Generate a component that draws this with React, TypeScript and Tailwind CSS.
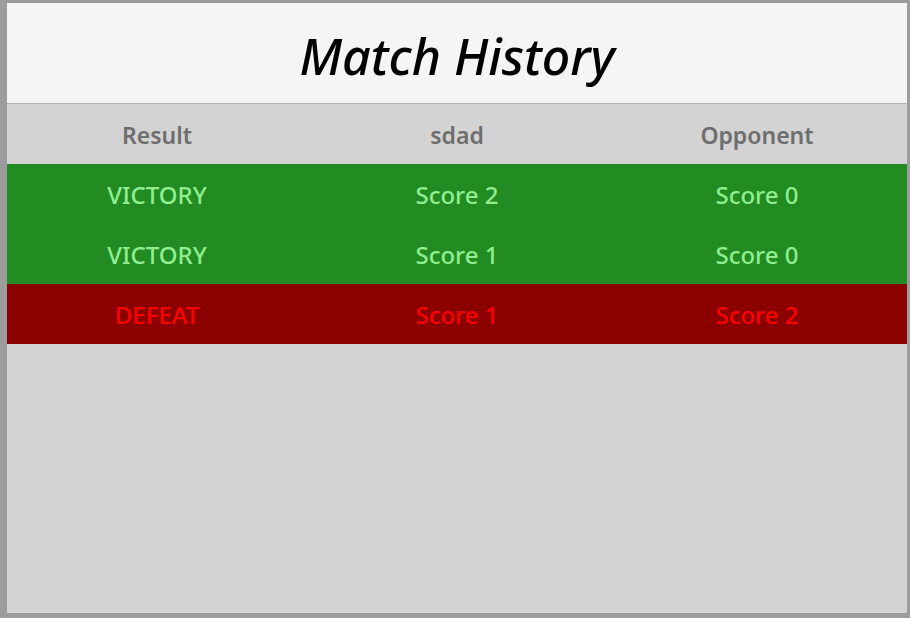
const matches = [
  { result: "VICTORY", mine: "Score 2", theirs: "Score 0", win: true },
  { result: "VICTORY", mine: "Score 1", theirs: "Score 0", win: true },
  { result: "DEFEAT", mine: "Score 1", theirs: "Score 2", win: false },
];

export default function App() {
  return (
    <div
      className="h-[618px] w-[910px] bg-[#9c9c9c] pt-[3px] pl-[7px]"
      style={{ fontFamily: '"Noto Sans", "Open Sans", sans-serif' }}
    >
      <div className="flex h-[610px] w-[900px] flex-col bg-[#d3d3d3]">
        {/* title */}
        <div className="flex h-[101px] items-center justify-center border-b border-[#b4b4b4] bg-[#f5f5f5] pt-[6px]">
          <h1 className="text-[50px] font-medium italic text-black">Match History</h1>
        </div>

        {/* header */}
        <div className="grid h-[60px] grid-cols-3 items-center pt-[2px] text-center text-[23px] font-semibold text-[#6e6e6e]">
          <span>Result</span>
          <span>sdad</span>
          <span>Opponent</span>
        </div>

        {matches.map((m, i) => (
          <div
            key={i}
            className={`grid h-[60px] grid-cols-3 items-center pt-[2px] text-center text-[24px] font-medium ${
              m.win ? "bg-[#228b22] text-[#90ee90]" : "bg-[#8b0000] text-[#ff0000]"
            }`}
          >
            <span>{m.result}</span>
            <span>{m.mine}</span>
            <span>{m.theirs}</span>
          </div>
        ))}
      </div>
    </div>
  );
}
